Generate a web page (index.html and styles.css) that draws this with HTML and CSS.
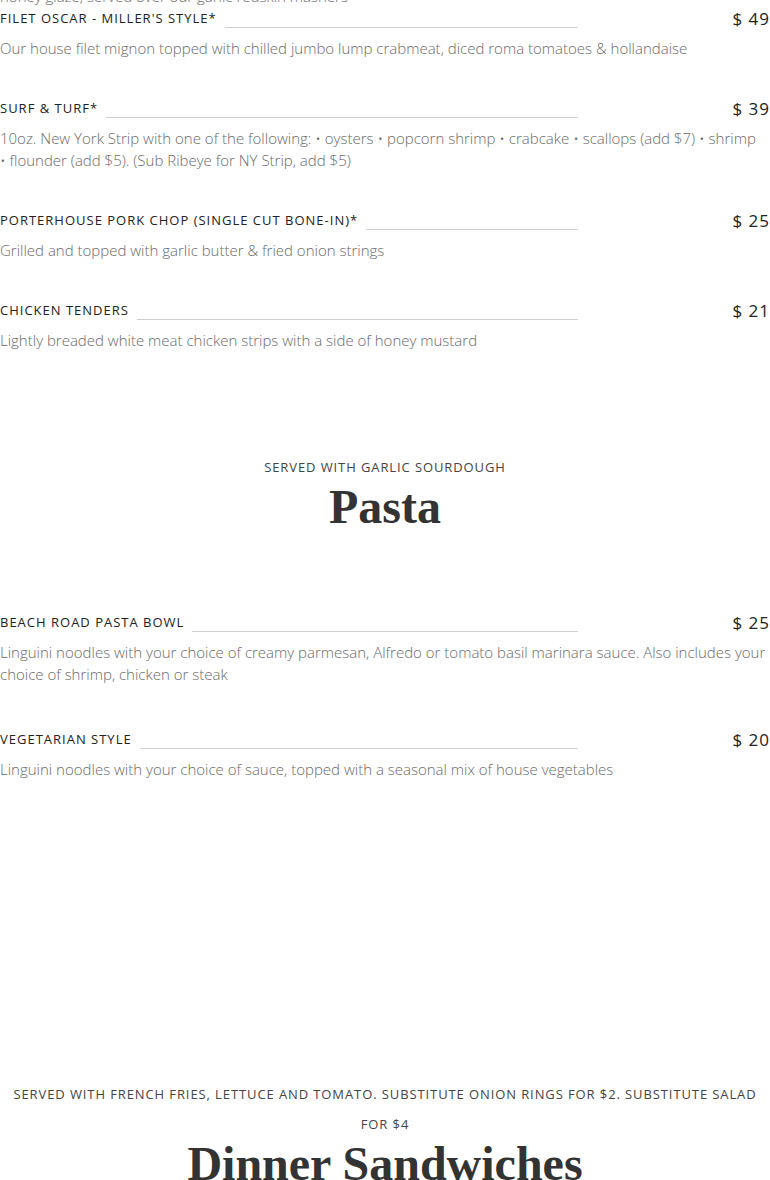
FILE: index.html
```html
<!DOCTYPE html>
<html lang="en">
<head>
<meta charset="utf-8">
<title>Menu</title>
<link rel="stylesheet" href="styles.css">
</head>
<body>
<div class="menu">
  <section class="section section--entrees">
    <div class="item item--cut">
      <div class="item-head">
        <div class="item-left"><span class="item-name">Bourbon Glazed Salmon</span><span class="item-rule"></span></div>
        <div class="item-price">$ 32</div>
      </div>
      <p class="item-desc">Fresh Atlantic salmon fillet grilled and finished with our house-made bourbon<br>honey glaze, served over our garlic redskin mashers</p>
    </div>
    <div class="item">
      <div class="item-head">
        <div class="item-left"><span class="item-name">Filet Oscar - Miller's Style*</span><span class="item-rule"></span></div>
        <div class="item-price">$ 49</div>
      </div>
      <p class="item-desc">Our house filet mignon topped with chilled jumbo lump crabmeat, diced roma tomatoes &amp; hollandaise</p>
    </div>
    <div class="item">
      <div class="item-head">
        <div class="item-left"><span class="item-name">Surf &amp; Turf*</span><span class="item-rule"></span></div>
        <div class="item-price">$ 39</div>
      </div>
      <p class="item-desc">10oz. New York Strip with one of the following: • oysters • popcorn shrimp • crabcake • scallops (add $7) • shrimp •&nbsp;flounder (add $5). (Sub Ribeye for NY Strip, add $5)</p>
    </div>
    <div class="item">
      <div class="item-head">
        <div class="item-left"><span class="item-name">Porterhouse Pork Chop (Single Cut Bone-In)*</span><span class="item-rule"></span></div>
        <div class="item-price">$ 25</div>
      </div>
      <p class="item-desc">Grilled and topped with garlic butter &amp; fried onion strings</p>
    </div>
    <div class="item">
      <div class="item-head">
        <div class="item-left"><span class="item-name">Chicken Tenders</span><span class="item-rule"></span></div>
        <div class="item-price">$ 21</div>
      </div>
      <p class="item-desc">Lightly breaded white meat chicken strips with a side of honey mustard</p>
    </div>
  </section>

  <section class="section section--pasta">
    <header class="section-header">
      <p class="section-sub">Served with garlic sourdough</p>
      <h2 class="section-title">Pasta</h2>
    </header>
    <div class="item item--wide">
      <div class="item-head">
        <div class="item-left"><span class="item-name">Beach Road Pasta Bowl</span><span class="item-rule"></span></div>
        <div class="item-price">$ 25</div>
      </div>
      <p class="item-desc">Linguini noodles with your choice of creamy parmesan, Alfredo or tomato basil marinara sauce. Also includes your choice of shrimp, chicken or steak</p>
    </div>
    <div class="item">
      <div class="item-head">
        <div class="item-left"><span class="item-name">Vegetarian Style</span><span class="item-rule"></span></div>
        <div class="item-price">$ 20</div>
      </div>
      <p class="item-desc">Linguini noodles with your choice of sauce, topped with a seasonal mix of house vegetables</p>
    </div>
  </section>

  <section class="section section--sandwiches">
    <header class="section-header">
      <p class="section-sub">Served with French fries, lettuce and tomato. Substitute onion rings for $2. Substitute salad for $4</p>
      <h2 class="section-title">Dinner Sandwiches</h2>
    </header>
  </section>
</div>
</body>
</html>
```
FILE: styles.css
```css
html, body {
  margin: 0;
  padding: 0;
  background: #fff;
}

body {
  font-family: "Open Sans", "Liberation Sans", sans-serif;
  color: #222;
  overflow: hidden;
}

.menu {
  width: 770px;
  margin-top: -68px;
}

.item {
  margin-bottom: 37px;
}

.item--cut {
  margin-bottom: -1px;
}

.item--wide {
  margin-bottom: 42px;
}

.item-head {
  display: flex;
  align-items: center;
  height: 24px;
}

.item-left {
  width: 75%;
  display: flex;
  align-items: center;
}

.item-name {
  font-size: 13px;
  line-height: 24px;
  letter-spacing: 1px;
  text-transform: uppercase;
  color: #222;
  white-space: nowrap;
}

.item-rule {
  flex: 1;
  height: 1px;
  background: #d0d0d0;
  margin: 18px 0 0 8px;
}

.item-price {
  width: 25%;
  text-align: right;
  font-size: 17px;
  letter-spacing: 1px;
  line-height: 24px;
  color: #222;
  padding-top: 2px;
}

.item-desc {
  margin: 7px 0 0;
  font-size: 15px;
  line-height: 22px;
  font-weight: 300;
  color: #6a6a6a;
}

.section--pasta {
  margin-top: 101px;
}

.section--pasta .section-header {
  margin-bottom: 78px;
}

.section--sandwiches {
  margin-top: 299px;
}

.section-header {
  text-align: center;
}

.section-sub {
  margin: 0;
  font-size: 13px;
  line-height: 30px;
  letter-spacing: 0.9px;
  text-transform: uppercase;
  color: #444;
}

.section-title {
  margin: 0;
  font-family: "Liberation Serif", "DejaVu Serif", serif;
  font-weight: 700;
  font-size: 48px;
  line-height: 50px;
  color: #333;
}
```
